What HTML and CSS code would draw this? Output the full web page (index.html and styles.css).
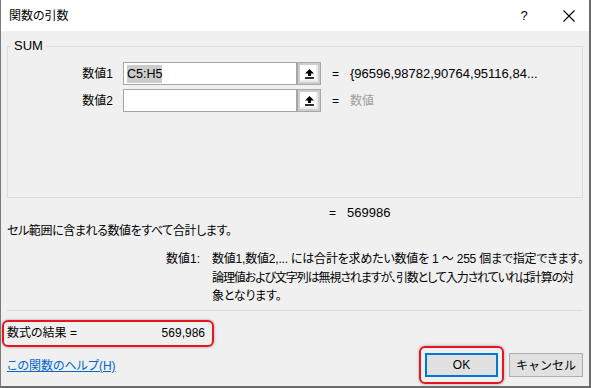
FILE: index.html
```html
<!DOCTYPE html>
<html lang="ja">
<head>
  <meta charset="UTF-8">
  <title>関数の引数</title>
  <link rel="stylesheet" href="styles.css">
</head>
<body>

<div class="dialog">
  <div class="titlebar">
    <span class="title">関数の引数</span>
    <span class="help">?</span>
    <span class="close">
      <svg width="12" height="12" viewBox="0 0 12 12"><path d="M0.5 0.5 L11.5 11.5 M11.5 0.5 L0.5 11.5" stroke="#000" stroke-width="1.1" fill="none"/></svg>
    </span>
  </div>

  <div class="dialog-body">
    <fieldset class="func-group">
      <legend>SUM</legend>
      <div class="arg-row">
        <label class="arg-label">数値1</label>
        <div class="arg-input"><span class="selected">C5:H5</span></div>
        <button class="ref-btn">
          <svg width="9" height="10" viewBox="0 0 9 10"><path d="M4.5 0 L9 4.5 H6 V7 H3 V4.5 H0 Z" fill="#000"/><rect x="0" y="8.2" width="9" height="1.6" fill="#000"/></svg>
        </button>
        <span class="eq">=</span>
        <span class="arg-value">{96596,98782,90764,95116,84...</span>
      </div>
      <div class="arg-row">
        <label class="arg-label">数値2</label>
        <div class="arg-input"></div>
        <button class="ref-btn">
          <svg width="9" height="10" viewBox="0 0 9 10"><path d="M4.5 0 L9 4.5 H6 V7 H3 V4.5 H0 Z" fill="#000"/><rect x="0" y="8.2" width="9" height="1.6" fill="#000"/></svg>
        </button>
        <span class="eq">=</span>
        <span class="arg-value placeholder">数値</span>
      </div>
    </fieldset>

    <div class="total"><span class="eq">=</span><span class="arg-value">569986</span></div>

    <p class="desc">セル範囲に含まれる数値をすべて合計します。</p>

    <div class="arg-help">
      <span class="arg-name">数値1:</span>
      <p>数値1,数値2,... には合計を求めたい数値を 1 ～ 255 個まで指定できます。<br><span class="tight">論理値および文字列は無視されますが、引数として入力されていれば計算の対</span><br>象となります。</p>
    </div>

    <hr class="sep">

    <div class="footer">
      <div class="footer-left">
        <div class="result-box">
          <span>数式の結果 =</span>
          <span>569,986</span>
        </div>
        <a href="#" class="help-link">この関数のヘルプ(H)</a>
      </div>
      <div class="footer-right">
        <div class="ok-mark"><button class="btn btn-default">OK</button></div>
        <button class="btn">キャンセル</button>
      </div>
    </div>
  </div>
</div>

</body>
</html>
```

FILE: styles.css
```css
body {
  margin: 0;
  font-family: "Liberation Sans", "Noto Sans CJK JP", sans-serif;
  font-size: 12px;
  font-feature-settings: "palt";
  color: #000;
  background: #fff;
}

.dialog {
  width: 591px;
  height: 388px;
  box-sizing: border-box;
  background: #f0f0f0;
  border-left: 1px solid #7a7a7a;
  border-right: 2px solid #6b6b6b;
  border-bottom: 2px solid #6b6b6b;
  display: flex;
  flex-direction: column;
}

/* title bar */
.titlebar {
  height: 31px;
  background: #fff;
  display: flex;
  align-items: center;
  padding: 0 0 0 8px;
}
.title {
  flex: 1;
  font-size: 12px;
  line-height: 16px;
}
.help {
  width: 30px;
  text-align: center;
  font-size: 13px;
  margin-right: 24px;
}
.close {
  width: 12px;
  height: 12px;
  display: flex;
  margin-right: 14px;
}

.dialog-body {
  flex: 1;
  padding: 7px 6px 0;
  display: flex;
  flex-direction: column;
}

/* SUM group */
.func-group {
  margin: 0;
  padding: 8px 0 85px;
  border: 1px solid #dcdcdc;
  min-width: 0;
}
.func-group legend {
  margin-left: 3px;
  padding: 0 3px;
  font-size: 13px;
  line-height: 16px;
}

.arg-row {
  display: flex;
  align-items: center;
  height: 23px;
  margin-bottom: 4px;
}
.arg-row:last-child {
  margin-bottom: 0;
}
.arg-label {
  width: 105px;
  text-align: right;
  margin-right: 10px;
  line-height: 16px;
}
.arg-input {
  width: 174px;
  height: 23px;
  box-sizing: border-box;
  background: #fff;
  border: 1px solid #a5a5a5;
  display: flex;
  align-items: center;
  padding-left: 3px;
  font-size: 12.5px;
}
.selected {
  background: #cccccc;
  line-height: 18px;
}
.ref-btn {
  width: 24px;
  height: 23px;
  box-sizing: border-box;
  margin: 0;
  padding: 0;
  background: #fff;
  border: 1px solid #a8a8a8;
  box-shadow: inset 0 0 0 2px #cdcdcd, inset -4px -4px 0 #ececec;
  display: flex;
  align-items: center;
  justify-content: center;
}
.eq {
  margin-left: 11px;
  width: 6px;
  margin-right: 12px;
  line-height: 16px;
}
.arg-value {
  font-size: 13px;
  line-height: 16px;
  white-space: nowrap;
}
.placeholder {
  font-size: 12px;
  color: #a0a0a0;
}

.total {
  display: flex;
  margin: 7px 0 0 311px;
  line-height: 18px;
}

.desc {
  margin: 1px 0 0;
  line-height: 18px;
  letter-spacing: -0.4px;
}

.arg-help {
  display: flex;
  margin-top: 10px;
  padding-left: 159px;
  line-height: 18.5px;
}
.arg-name {
  width: 46px;
  flex-shrink: 0;
}
.arg-help p {
  margin: 0;
  white-space: nowrap;
  letter-spacing: -0.2px;
}
.arg-help .tight {
  letter-spacing: -1.1px;
}

.sep {
  margin: 4px 0 0;
  border: none;
  border-top: 1px solid #dadada;
  height: 0;
}

/* footer */
.footer {
  display: flex;
  justify-content: space-between;
}
.footer-left {
  display: flex;
  flex-direction: column;
  align-items: flex-start;
}
.result-box {
  margin: 9px 0 0 -5px;
  width: 212px;
  height: 27px;
  box-sizing: border-box;
  border: 2px solid #e8141e;
  border-radius: 6px;
  box-shadow: 0 0 3px rgba(0,0,0,0.35);
  display: flex;
  justify-content: space-between;
  align-items: center;
  padding: 0 7px 0 3px;
  line-height: 16px;
}
.help-link {
  margin-top: 11px;
  color: #0066cc;
  line-height: 16px;
}

.footer-right {
  display: flex;
  align-items: center;
  gap: 5px;
  margin-top: 35px;
  align-self: flex-start;
}
.ok-mark {
  border: 2px solid #e8141e;
  border-radius: 6px;
  padding: 5px 4px;
  box-shadow: 0 0 3px rgba(0,0,0,0.35);
}
.btn {
  width: 74px;
  height: 24px;
  box-sizing: border-box;
  margin: 0;
  padding: 0;
  font-family: inherit;
  font-size: 12px;
  background: #e1e1e1;
  border: 1px solid #adadad;
  color: #000;
}
.btn-default {
  width: 73px;
  border: 2px solid #0078d7;
}
```
